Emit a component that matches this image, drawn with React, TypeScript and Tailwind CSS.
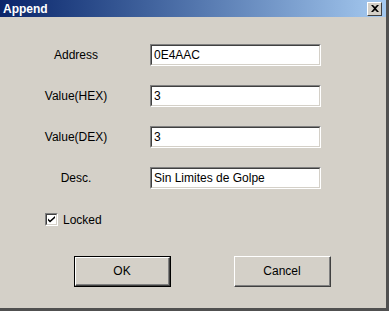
import React from 'react';

const font = { fontFamily: '"Liberation Sans", Arial, sans-serif' };

function Field({ label, value }: { label: string; value: string }) {
  return (
    <div className="flex items-center h-[22px]">
      <div className="w-[100px] ml-[26px] text-center text-[12px] text-black">{label}</div>
      <div className="ml-[24px] w-[171px] h-[22px] border-t border-l border-t-[#808080] border-l-[#808080] border-b border-r border-b-white border-r-white">
        <div className="h-full border-t border-l border-t-[#404040] border-l-[#404040] border-b border-r border-b-[#d4d0c8] border-r-[#d4d0c8] bg-white px-[2px] flex items-center text-[12px] text-black">
          {value}
        </div>
      </div>
    </div>
  );
}

function Button({ label, isDefault }: { label: string; isDefault?: boolean }) {
  return (
    <div className={`w-[97px] h-[31px] ${isDefault ? 'border border-black' : ''}`}>
      <div className="h-full border-t border-l border-t-white border-l-white border-b border-r border-b-[#404040] border-r-[#404040]">
        <div className="h-full border-b border-r border-b-[#808080] border-r-[#808080] flex items-center justify-center text-[12px] text-black">
          {label}
        </div>
      </div>
    </div>
  );
}

export default function App() {
  return (
    <div className="w-[389px] h-[311px] bg-[#d4d0c8] flex flex-col border-r-[3px] border-r-[#505050] border-b-[3px] border-b-[#505050] overflow-hidden" style={font}>
      <div className="h-[17px] flex items-center justify-between pl-[3px] pr-[4px] bg-gradient-to-r from-[#0a246a] to-[#a6caf0]">
        <span className="text-white font-bold text-[12px] leading-none">Append</span>
        <div className="w-[15px] h-[14px] bg-[#d4d0c8] border-t border-l border-t-white border-l-white border-b border-r border-b-[#404040] border-r-[#404040] flex items-center justify-center">
          <svg width="8" height="7" viewBox="0 0 8 7">
            <path d="M0 0h2l2 2 2-2h2L5 3.5 8 7H6L4 5 2 7H0l3-3.5z" fill="black" />
          </svg>
        </div>
      </div>
      <div className="flex-1 border-b border-b-[#d4d0c8] flex flex-col">
        <div className="flex flex-col gap-[19px] mt-[27px]">
          <Field label="Address" value="0E4AAC" />
          <Field label="Value(HEX)" value="3" />
          <Field label="Value(DEX)" value="3" />
          <Field label="Desc." value="Sin Limites de Golpe" />
        </div>
        <div className="flex items-center mt-[24px] ml-[45px] h-[13px]">
          <div className="w-[13px] h-[13px] border-t border-l border-t-[#808080] border-l-[#808080] border-b border-r border-b-white border-r-white">
            <div className="h-full bg-white border-t border-l border-t-[#404040] border-l-[#404040] border-b border-r border-b-[#d4d0c8] border-r-[#d4d0c8] flex items-center justify-center">
              <svg width="7" height="7" viewBox="0 0 7 7">
                <path d="M0 2.5l2 2 5-4.5v2L2 6.5 0 4.5z" fill="black" />
              </svg>
            </div>
          </div>
          <span className="ml-[5px] text-[12px] text-black">Locked</span>
        </div>
        <div className="flex mt-[30px] ml-[74px] gap-[63px]">
          <Button label="OK" isDefault />
          <Button label="Cancel" />
        </div>
      </div>
    </div>
  );
}
